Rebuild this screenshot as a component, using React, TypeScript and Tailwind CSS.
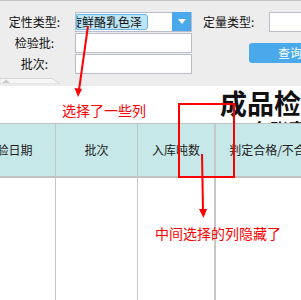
const cjk = "font-['Noto_Sans_CJK_SC','Noto_Sans',sans-serif]";

const Label = ({ children }: { children: React.ReactNode }) => (
  <div className="w-[69px] text-center text-[12px] leading-[20px] text-[#111]">{children}</div>
);

const App = () => {
  return (
    <div className={`relative w-[301px] h-[300px] overflow-hidden bg-white flex flex-col ${cjk}`}>
      {/* search form */}
      <div className="relative h-[86px] shrink-0 bg-[#ededed] border-t border-[#c4c4c4] pt-[11px] flex">
        <div className="flex flex-col gap-px">
          <div className="flex items-center gap-[6px]">
            <Label>定性类型:</Label>
            <div className="flex h-[20px]">
              <div className="w-[97px] h-[20px] bg-white border border-[#b8bccb] border-r-0 overflow-hidden">
                <div className="w-[72px] h-[16px] mt-px bg-[#bde5f5] border border-[#6cb6e2] rounded-r-[3px] overflow-hidden flex items-center">
                  <span className="-ml-[7px] whitespace-nowrap text-[12px] leading-[14px] text-[#111]">旋鲜酪乳色泽</span>
                </div>
              </div>
              <div className="w-[20px] h-[20px] bg-[#49a9ea] border-r border-b border-[#b8bccb] flex items-center justify-center">
                <svg width="8" height="5" viewBox="0 0 8 5">
                  <path d="M0 0h8L4 5z" fill="#fff" />
                </svg>
              </div>
            </div>
          </div>
          <div className="flex items-center gap-[6px]">
            <Label>检验批:</Label>
            <div className="w-[117px] h-[20px] bg-white border border-[#b8bccb]" />
          </div>
          <div className="flex items-center gap-[6px]">
            <Label>批次:</Label>
            <div className="w-[117px] h-[20px] bg-white border border-[#b8bccb]" />
          </div>
        </div>
        <div className="ml-[11px] flex flex-col">
          <div className="flex items-center h-[20px]">
            <span className="w-[66px] text-[12px] leading-[20px] text-[#111] whitespace-nowrap">定量类型:</span>
            <div className="w-[60px] h-[20px] bg-white border border-[#b8bccb]" />
          </div>
          <button
            type="button"
            className="mt-[11px] ml-[46px] w-[70px] h-[20px] bg-[#49a9ea] rounded-[3px] text-white text-[12px] leading-[20px] text-left pl-[29px] whitespace-nowrap">
            查询
          </button>
        </div>
        {/* collapse tab */}
        <div className="absolute left-0 bottom-[2px] w-[62px] h-[6px]">
          <svg width="62" height="6" viewBox="0 0 62 6" className="block">
            <path d="M0 0.5H52L60 6H0z" fill="#f6f6f6" stroke="#d6d6d6" strokeWidth="1" />
            <path d="M2 5L6 1.5L10 5z" fill="#c8c8c8" />
          </svg>
        </div>
      </div>

      {/* title */}
      <div className="h-[37px] shrink-0 overflow-hidden pl-[220px] pt-[2px] whitespace-nowrap">
        <div className="text-[27px] leading-[30px] font-bold text-[#111]">成品检验</div>
        <div className="pl-[32px] text-[18px] leading-[22px] font-bold text-[#111]">台账表</div>
      </div>

      {/* table header */}
      <div className="h-[55px] shrink-0 flex -ml-[38px] bg-[#c6e8e8] border-t border-[#c2c2c2] border-b-2 border-b-[#c2c2c2] text-[12px] text-[#222]">
        <div className="w-[94px] shrink-0 flex items-center justify-center border-r border-[#c6c6c6]">检验日期</div>
        <div className="w-[82px] shrink-0 flex items-center justify-center border-r border-[#c6c6c6]">批次</div>
        <div className="w-[78px] shrink-0 flex items-center justify-center border-r-2 border-[#c6c6c6]">入库吨数</div>
        <div className="w-[115px] shrink-0 flex items-center justify-center whitespace-nowrap">判定合格/不合格</div>
      </div>

      {/* table body */}
      <div className="flex-1 flex -ml-[38px]">
        <div className="w-[94px] shrink-0 border-r border-[#c6c6c6]" />
        <div className="w-[82px] shrink-0 border-r border-[#c6c6c6]" />
        <div className="w-[78px] shrink-0 border-r-2 border-[#c6c6c6]" />
        <div className="w-[115px] shrink-0" />
      </div>

      {/* annotations */}
      <svg className="absolute inset-0 pointer-events-none" width="301" height="300" viewBox="0 0 301 300">
        <line x1="88" y1="26" x2="79" y2="90" stroke="#f00" strokeWidth="2" />
        <path d="M74.5 88L78 97L82 89z" fill="#f00" />
        <rect x="179" y="104" width="55" height="73" fill="none" stroke="#f00" strokeWidth="2" />
        <line x1="202" y1="154" x2="203" y2="210" stroke="#f00" strokeWidth="2" />
        <path d="M199 209L203.5 218L207 209z" fill="#f00" />
      </svg>
      <div className="absolute left-[62px] top-[101px] text-[14px] leading-[18px] text-[#f00] whitespace-nowrap">选择了一些列</div>
      <div className="absolute left-[155px] top-[224px] text-[14px] leading-[18px] text-[#f00] whitespace-nowrap">中间选择的列隐藏了</div>
    </div>
  );
};

export default App;
